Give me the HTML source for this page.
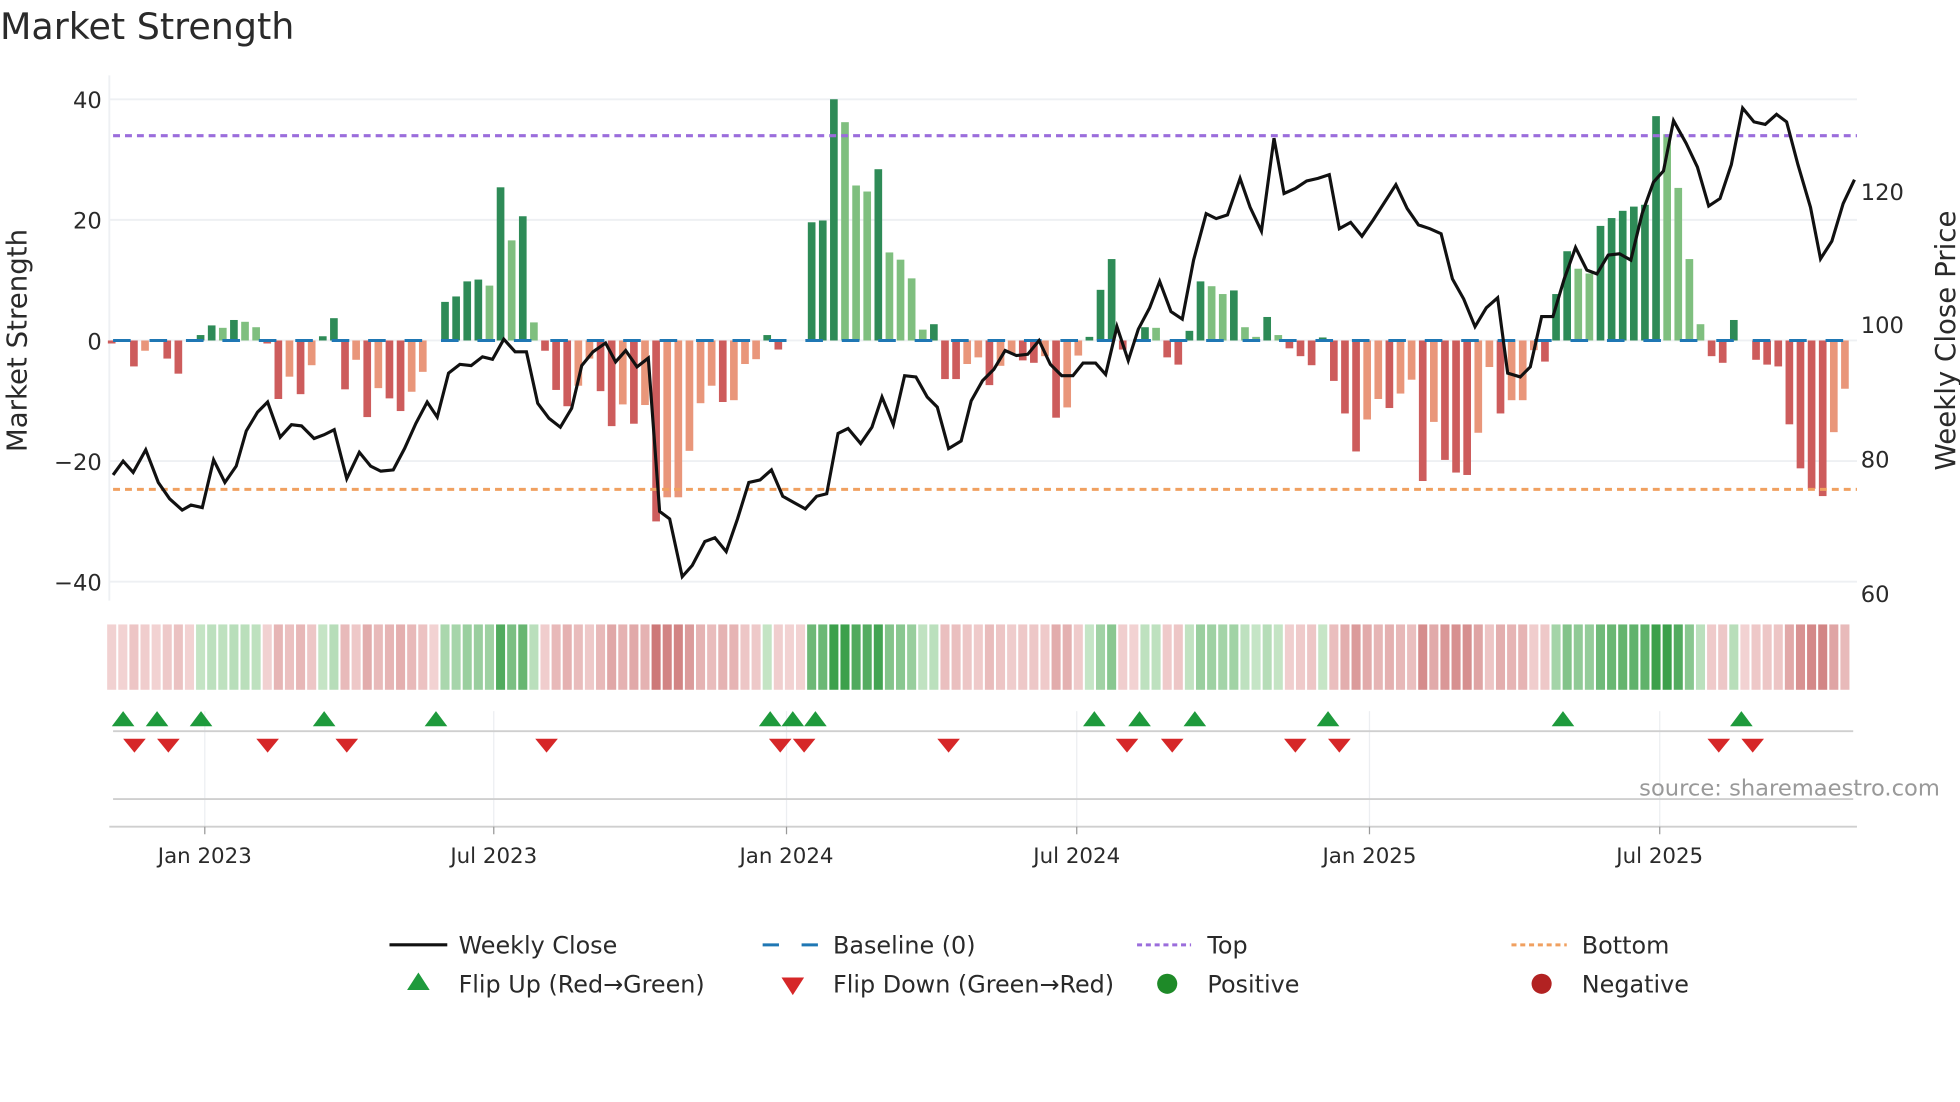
<!DOCTYPE html>
<html><head><meta charset="utf-8">
<style>
html,body{margin:0;padding:0;background:#fff;width:1960px;height:1102px;overflow:hidden}
svg{display:block}
text{font-family:"DejaVu Sans","Liberation Sans",sans-serif;fill:#2a2a2a}
</style></head>
<body>
<svg id="s" width="1960" height="1102" viewBox="0 0 1560 877.1" preserveAspectRatio="none" xmlns="http://www.w3.org/2000/svg">
<text x="0" y="31" font-size="29" fill="#333">Market Strength</text>
<g stroke="#eef0f3" stroke-width="1.5">
<line x1="87" y1="79" x2="1478" y2="79"/><line x1="87" y1="175" x2="1478" y2="175"/>
<line x1="87" y1="271" x2="1478" y2="271"/><line x1="87" y1="367" x2="1478" y2="367"/>
<line x1="87" y1="463" x2="1478" y2="463"/><line x1="87" y1="60" x2="87" y2="478"/>
</g>
<g font-size="18" text-anchor="end">
<text x="81" y="86">40</text><text x="81" y="182">20</text><text x="81" y="278">0</text>
<text x="81" y="374">−20</text><text x="81" y="470">−40</text>
</g>
<g font-size="18">
<text x="1481" y="159">120</text><text x="1481" y="265">100</text>
<text x="1481" y="372">80</text><text x="1481" y="479">60</text>
</g>
<text font-size="22" text-anchor="middle" transform="translate(21,271) rotate(-90)">Market Strength</text>
<text font-size="22" text-anchor="middle" transform="translate(1556,271) rotate(-90)">Weekly Close Price</text>
<g id="bars"></g>
<line x1="90" y1="108" x2="1478" y2="108" stroke="#9b6ddc" stroke-width="2.4" stroke-dasharray="5.5 4"/>
<line x1="90" y1="389.5" x2="1478" y2="389.5" stroke="#f0a060" stroke-width="2.4" stroke-dasharray="5.5 4"/>
<line x1="90" y1="271" x2="1478" y2="271" stroke="#1f77b4" stroke-width="2.4" stroke-dasharray="14 15"/>
<polyline id="price" fill="none" stroke="#111" stroke-width="2.5" stroke-linejoin="miter"/>
<g id="strip"></g>
<g stroke="#eceef1" stroke-width="1">
<line x1="163" y1="566" x2="163" y2="658"/><line x1="393" y1="566" x2="393" y2="658"/>
<line x1="626" y1="566" x2="626" y2="658"/><line x1="857" y1="566" x2="857" y2="658"/>
<line x1="1090" y1="566" x2="1090" y2="658"/><line x1="1321" y1="566" x2="1321" y2="658"/>
</g>
<line x1="90" y1="582" x2="1475" y2="582" stroke="#cfcfcf" stroke-width="1.5"/>
<line x1="90" y1="636" x2="1475" y2="636" stroke="#cfcfcf" stroke-width="1.5"/>
<line x1="87" y1="658" x2="1478" y2="658" stroke="#cfcfcf" stroke-width="1.5"/>
<g id="marks"></g>
<text x="1544" y="633" font-size="18" text-anchor="end" fill="#999" style="fill:#999">source: sharemaestro.com</text>
<g font-size="17" text-anchor="middle">
<line x1="163" y1="658" x2="163" y2="664" stroke="#999"/><text x="163" y="687">Jan 2023</text>
<line x1="393" y1="658" x2="393" y2="664" stroke="#999"/><text x="393" y="687">Jul 2023</text>
<line x1="626" y1="658" x2="626" y2="664" stroke="#999"/><text x="626" y="687">Jan 2024</text>
<line x1="857" y1="658" x2="857" y2="664" stroke="#999"/><text x="857" y="687">Jul 2024</text>
<line x1="1090" y1="658" x2="1090" y2="664" stroke="#999"/><text x="1090" y="687">Jan 2025</text>
<line x1="1321" y1="658" x2="1321" y2="664" stroke="#999"/><text x="1321" y="687">Jul 2025</text>
</g>
<g font-size="19">
<line x1="310" y1="752" x2="356" y2="752" stroke="#111" stroke-width="2.5"/><text x="365" y="759">Weekly Close</text>
<line x1="607" y1="752" x2="651" y2="752" stroke="#1f77b4" stroke-width="2.4" stroke-dasharray="13 18"/><text x="663" y="759">Baseline (0)</text>
<line x1="905" y1="752" x2="948" y2="752" stroke="#9b6ddc" stroke-width="2.4" stroke-dasharray="4 3"/><text x="961" y="759">Top</text>
<line x1="1203" y1="752" x2="1247" y2="752" stroke="#f0a060" stroke-width="2.4" stroke-dasharray="4 3"/><text x="1259" y="759">Bottom</text>
<polygon points="324,788 342,788 333,774" fill="#1e9a3c"/><text x="365" y="790">Flip Up (Red→Green)</text>
<polygon points="622,778 640,778 631,792" fill="#d62728"/><text x="663" y="790">Flip Down (Green→Red)</text>
<circle cx="929" cy="783" r="8" fill="#1e8a28"/><text x="961" y="790">Positive</text>
<circle cx="1227" cy="783" r="8" fill="#b22222"/><text x="1259" y="790">Negative</text>
</g>
</svg>
<script>
var NS="http://www.w3.org/2000/svg";
var V=[[-0.5,1],[0,1],[-4.3,1],[-1.7,0],[0,1],[-3,1],[-5.5,1],[0,1],[0.9,1],[2.5,1],[2.1,0],[3.4,1],[3.1,0],[2.2,0],[-0.5,1],[-9.7,1],[-6,0],[-8.9,1],[-4.1,0],[0.7,1],[3.7,1],[-8.1,1],[-3.2,0],[-12.7,1],[-7.9,0],[-9.6,1],[-11.7,1],[-8.5,0],[-5.2,0],[0,1],
[6.4,1],[7.3,1],[9.8,1],[10.1,1],[9.1,0],[25.4,1],[16.6,0],[20.6,1],[3,0],[-1.7,1],[-8.2,1],[-10.9,1],[-7.5,0],[-3,0],[-8.4,1],[-14.2,1],[-10.6,0],[-13.8,1],[-10.7,0],[-30,1],[-26,0],[-26,0],[-18.3,0],[-10.4,0],[-7.5,0],[-10.2,1],[-9.9,0],[-3.9,0],[-3.1,0],[0.9,1],[-1.5,1],
[0,1],[0,1],[19.6,1],[19.9,1],[40,1],[36.2,0],[25.7,0],[24.7,0],[28.4,1],[14.6,0],[13.4,0],[10.3,0],[1.8,0],[2.7,1],[-6.4,1],[-6.4,1],[-3.9,0],[-2.8,0],[-7.4,1],[-4.2,0],[-2.1,0],[-3.3,1],[-3.7,1],[-2.6,0],[-12.8,1],[-11.1,0],[-2.5,0],[0.6,1],[8.4,1],[13.5,1],[-1.5,1],[0,1],
[2.2,1],[2.1,0],[-2.8,1],[-4,1],[1.6,1],[9.8,1],[9,0],[7.7,0],[8.3,1],[2.2,0],[0.6,0],[3.9,1],[0.9,0],[-1.3,1],[-2.6,1],[-4.1,1],[0.5,1],[-6.7,1],[-12.1,1],[-18.4,1],[-13.1,0],[-9.7,0],[-11.2,1],[-8.8,0],[-6.5,0],[-23.3,1],[-13.5,0],[-19.8,1],[-21.9,1],[-22.3,1],[-15.3,0],[-4.4,0],
[-12.1,1],[-9.9,0],[-9.9,0],[-1.6,0],[-3.5,1],[7.7,1],[14.8,1],[11.9,0],[11.1,0],[19,1],[20.3,1],[21.5,1],[22.2,1],[22.5,1],[37.2,1],[34.2,0],[25.3,0],[13.5,0],[2.7,0],[-2.6,1],[-3.7,1],[3.4,1],[0,1],[-3.2,1],[-4,1],[-4.3,1],[-13.9,1],[-21.2,1],[-24.6,1],[-25.8,1],[-15.2,0],[-8]];
var bars=document.getElementById("bars"),strip=document.getElementById("strip");
function mix(a,b,t){var r=[];for(var k=0;k<3;k++)r.push(Math.round(a[k]+(b[k]-a[k])*t));return "rgb("+r.join(",")+")";}
for(var i=0;i<V.length;i++){
 var v=V[i][0],d=V[i][1]===undefined?0:V[i][1];
 var cx=88.9+i*8.843,w=6.1;
 if(v!==0){
  var r=document.createElementNS(NS,"rect");
  var h=Math.abs(v)*4.8;
  r.setAttribute("x",cx-w/2);r.setAttribute("width",w);
  r.setAttribute("y",v>0?271-h:271);r.setAttribute("height",h);
  r.setAttribute("fill",v>0?(d?"#2e8b57":"#7fbf7f"):(d?"#cd5c5c":"#e9967a"));
  bars.appendChild(r);
 }
 var t=Math.min(Math.abs(v)/30,1),c;
 if(v>0)c=mix([200,230,200],[60,160,75],t);else c=mix([242,210,210],[205,120,120],t);
 var s=document.createElementNS(NS,"rect");
 s.setAttribute("x",cx-3.6);s.setAttribute("width",7.2);s.setAttribute("y",497);s.setAttribute("height",52);s.setAttribute("fill",c);
 strip.appendChild(s);
}
var P=[[90,378],[98,367],[106,376],[116,358],[126,384],[135,397],[145,406],[152,402],[161,404],[170,366],[179,384],[188,371],[196,343],[205,328],[213,320],[223,348],[232,338],[240,339],[250,349],[258,346],[266,342],[276,381],[286,360],[295,371],[303,375],[313,374],[322,357],[331,337],[340,320],[348,332],[357,297],[366,290],[375,291],[384,284],[392,286],[401,270],[410,280],[419,280],[428,321],[437,333],[446,340],[455,325],[463,291],[472,280],[482,273],[490,288],[498,279],[507,292],[516,285],[525,407],[533,413],[543,459],[551,450],[561,431],[569,428],[578,439],[587,413],[596,384],[605,382],[614,374],[623,395],[632,400],[641,405],[650,395],[658,393],[667,345],[675,341],[685,353],[694,340],[702,316],[711,338],[720,299],[729,300],[738,316],[746,324],[755,357],[765,351],[773,319],[782,303],[791,294],[800,279],[809,283],[818,282],[827,271],[836,290],[845,299],[854,299],[862,289],[872,289],[880,298],[889,260],[898,287],[906,262],[915,245],[923,224],[932,248],[941,254],[950,207],[960,170],[968,174],[977,171],[987,142],[995,165],[1004,184],[1014,110],[1022,154],[1031,150],[1040,144],[1049,142],[1058,139],[1066,182],[1075,177],[1084,188],[1093,175],[1102,161],[1111,147],[1120,166],[1129,179],[1138,182],[1147,186],[1156,222],[1165,238],[1174,260],[1183,245],[1192,237],[1200,297],[1210,300],[1218,292],[1227,252],[1236,252],[1245,222],[1254,197],[1263,215],[1271,218],[1280,203],[1289,202],[1298,207],[1307,170],[1316,145],[1324,136],[1332,96],[1342,114],[1351,133],[1360,164],[1369,158],[1378,131],[1387,86],[1396,97],[1405,99],[1414,91],[1422,97],[1431,131],[1441,165],[1449,206],[1458,192],[1467,162],[1476,143]];
document.getElementById("price").setAttribute("points",P.map(function(p){return p.join(",")}).join(" "));
var marks=document.getElementById("marks"),h="";
[98,125,160,258,347,613,631,649,871,907,951,1057,1244,1386].forEach(function(x){h+='<polygon points="'+(x-9)+',578 '+(x+9)+',578 '+x+',566" fill="#1e9a3c"/>';});
[107,134,213,276,435,621,640,755,897,933,1031,1066,1368,1395].forEach(function(x){h+='<polygon points="'+(x-9)+',588 '+(x+9)+',588 '+x+',599" fill="#d62728"/>';});
marks.innerHTML=h;
</script>
</body></html>
